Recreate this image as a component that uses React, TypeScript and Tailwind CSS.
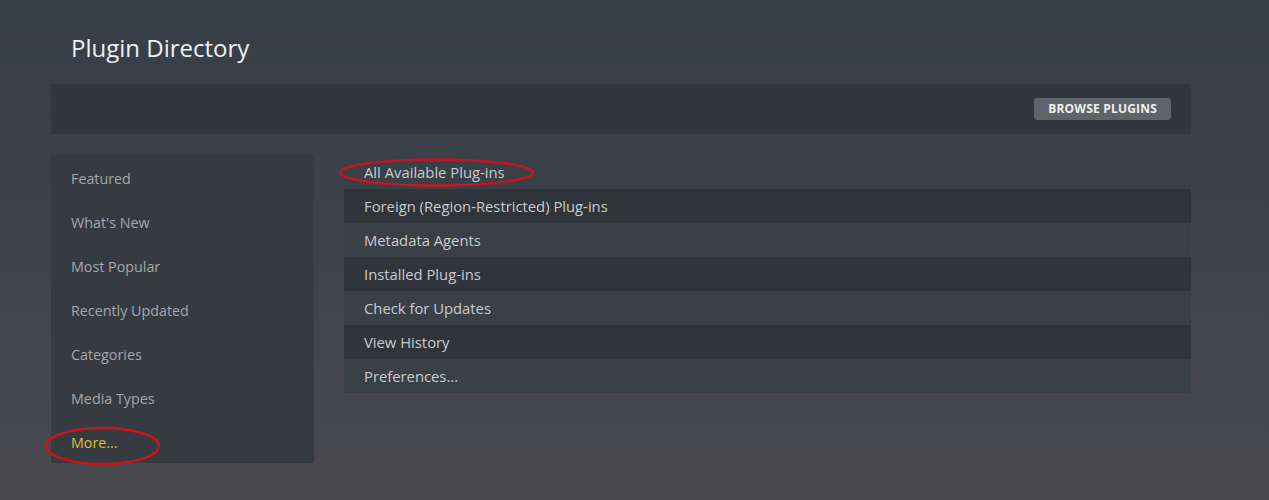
import React from 'react';

const sideItems = [
  'Featured',
  "What's New",
  'Most Popular',
  'Recently Updated',
  'Categories',
  'Media Types',
];

const listItems = [
  'All Available Plug-ins',
  'Foreign (Region-Restricted) Plug-ins',
  'Metadata Agents',
  'Installed Plug-ins',
  'Check for Updates',
  'View History',
  'Preferences...',
];

const RedRing: React.FC<{ className: string }> = ({ className }) => (
  <svg className={`absolute pointer-events-none ${className}`} viewBox="0 0 200 40" preserveAspectRatio="none">
    <ellipse cx="100" cy="20" rx="98" ry="18" fill="none" stroke="#c8141c" strokeWidth="2.5" vectorEffect="non-scaling-stroke" />
  </svg>
);

export default function App() {
  return (
    <div
      className="w-[1269px] h-[500px] overflow-hidden bg-gradient-to-b from-[#363e48] via-[#3e434b] to-[#4a4a4e] pl-[51px] pr-[78px] pt-[32px]"
      style={{ fontFamily: '"Open Sans", "Noto Sans", sans-serif' }}
    >
      <h1 className="pl-5 text-[24px] leading-[32px] text-[#eef0f2]">Plugin Directory</h1>

      <div className="mt-5 h-[50px] bg-[#31373f] flex items-center justify-end pr-5">
        <button className="h-[22px] px-[14px] rounded-[3px] bg-[#5f646b] text-[12px] font-bold text-[#f0f0f0] tracking-[0.2px]">
          BROWSE PLUGINS
        </button>
      </div>

      <div className="mt-[21px] flex gap-[30px] items-start">
        <div className="relative w-[263px] h-[308px] bg-[#363b42] pt-[2px]">
          {sideItems.map((t) => (
            <div key={t} className="h-[44px] flex items-center pl-5 text-[14.3px] text-[#a3a7ab]">
              {t}
            </div>
          ))}
          <div className="h-[44px] flex items-center pl-5 text-[14.3px] text-[#dcc22e]">More...</div>
          <RedRing className="left-[-6px] top-[271px] w-[115px] h-[40px]" />
        </div>

        <div className="relative flex-1">
          {listItems.map((t, i) => (
            <div
              key={t}
              className={`h-[34px] flex items-center pl-5 text-[14.8px] text-[#c9cbcd] ${
                i % 2 === 0 ? 'bg-[#394048]' : 'bg-[#30353c]'
              }`}
            >
              {t}
            </div>
          ))}
          <RedRing className="left-[-6px] top-[3px] w-[197px] h-[29px]" />
        </div>
      </div>
    </div>
  );
}
